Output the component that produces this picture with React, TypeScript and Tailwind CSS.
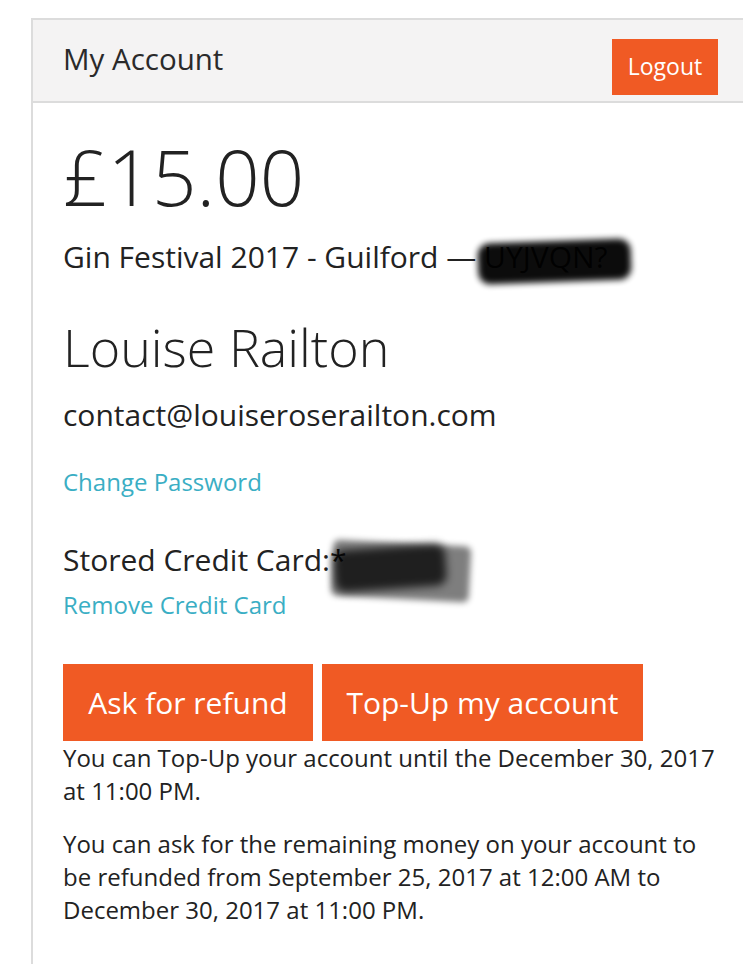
import { ReactNode } from "react";

function OrangeButton({ children, className = "" }: { children: ReactNode; className?: string }) {
  return (
    <button
      type="button"
      className={`bg-[#f05a24] text-white font-normal leading-none ${className}`}
    >
      {children}
    </button>
  );
}

// blurred marker scribble used to hide private bits
function Redacted({ children, className = "" }: { children: ReactNode; className?: string }) {
  return (
    <span className="relative inline-block">
      <span>{children}</span>
      <span className={`absolute bg-black blur-[3px] ${className}`} />
    </span>
  );
}

export default function App() {
  return (
    <div
      className="min-h-screen bg-white text-[#222] pt-[18px] pl-[31px] overflow-hidden"
      style={{ fontFamily: '"Open Sans", "Noto Sans", sans-serif' }}
    >
      <div className="min-h-[946px] border-l-2 border-t-2 border-[#dcdcdc]">
        <header className="h-[83px] bg-[#f4f3f3] border-b-2 border-[#dcdcdc] flex items-center justify-between pl-[30px] pr-[25px]">
          <h1 className="text-[29.5px] text-[#2a2a2a] mt-[-2px]">My Account</h1>
          <OrangeButton className="h-[56px] w-[106px] text-[23px] mt-[12px]">Logout</OrangeButton>
        </header>

        <main className="pl-[30px] pt-[34px]">
          <div className="text-[78px] font-light leading-none">£15.00</div>

          <div className="mt-[27px] text-[30px] leading-none">
            Gin Festival 2017 - Guilford —{" "}
            <Redacted className="-left-[6px] -right-[24px] -top-[1px] -bottom-[10px] rounded-[12px] opacity-95 rotate-[-2deg]">
              UYJVQN?
            </Redacted>
          </div>

          <div className="mt-[49px] text-[52px] font-light leading-none">Louise Railton</div>

          <div className="mt-[27px] text-[30px] leading-none">contact@louiseroserailton.com</div>

          <a href="#" className="block mt-[40px] text-[24px] leading-none text-[#3aaec4]">
            Change Password
          </a>

          <div className="mt-[51px] text-[30px] leading-none">
            Stored Credit Card:
            <span className="relative inline-block">
              <span className="inline-block w-[140px]">*</span>
              <span className="absolute left-[2px] right-[0px] -top-[2px] -bottom-[24px] bg-black opacity-50 blur-[3px] rounded-[6px] rotate-[3deg]" />
              <span className="absolute left-[4px] right-[24px] top-[2px] -bottom-[14px] bg-black opacity-75 blur-[4px] rounded-[10px] rotate-[-4deg]" />
            </span>
          </div>

          <a href="#" className="block mt-[18px] text-[24px] leading-none text-[#3aaec4]">
            Remove Credit Card
          </a>

          <div className="mt-[47px] flex gap-[9px]">
            <OrangeButton className="h-[77px] w-[250px] text-[30px]">Ask for refund</OrangeButton>
            <OrangeButton className="h-[77px] w-[321px] text-[30px]">Top-Up my account</OrangeButton>
          </div>

          <p className="mt-0 text-[24px] leading-[33px] max-w-[662px]">
            You can Top-Up your account until the December 30, 2017 at 11:00 PM.
          </p>
          <p className="mt-[20px] text-[24px] leading-[33px] max-w-[662px]">
            You can ask for the remaining money on your account to be refunded from September 25,
            2017 at 12:00 AM to December 30, 2017 at 11:00 PM.
          </p>
        </main>
      </div>
    </div>
  );
}
